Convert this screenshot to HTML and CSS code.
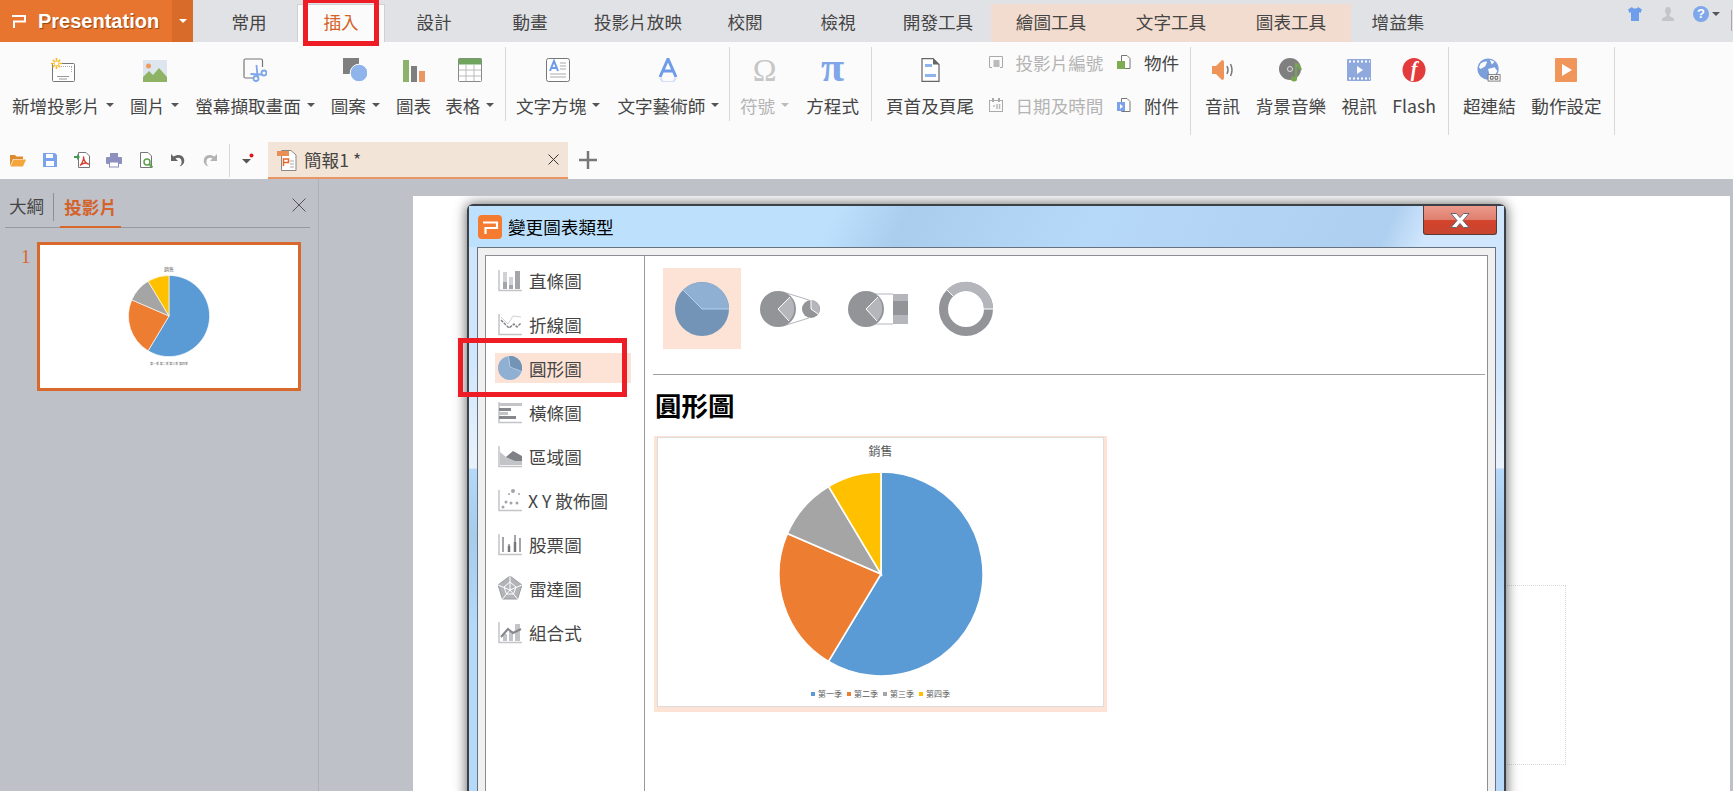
FILE: index.html
```html
<!DOCTYPE html>
<html lang="zh-Hant">
<head>
    <meta charset="UTF-8">
    <title>Presentation</title>
    <link rel="stylesheet" href="styles.css">
</head>
<body>
    <svg class="defs" width="0" height="0">
        <defs>
            <g id="pie" stroke="#fff" stroke-width="1.6">
                <path fill="#5b9bd5" d="M0 0V-102A102 102 0 1 1-52.5 87.4Z"/>
                <path fill="#ed7d31" d="M0 0L-52.5 87.4A102 102 0 0 1-93.6-40.5Z"/>
                <path fill="#a5a5a5" d="M0 0L-93.6-40.5A102 102 0 0 1-52.4-87.5Z"/>
                <path fill="#ffc000" d="M0 0L-52.4-87.5A102 102 0 0 1 0-102Z"/>
            </g>
            <path id="axis" fill="none" stroke="#c3c4c8" stroke-width="1.5" d="M1 2V22.5H24"/>
        </defs>
    </svg>

    <div class="topbar">
        <div class="logo">
            <svg class="logo-mark" width="16" height="14" viewBox="0 0 16 14"><path fill="none" stroke="#fff" stroke-width="2" d="M1 2H14V7.5H3V14"/></svg>
            <span class="logo-text">Presentation</span>
            <span class="logo-drop"><i class="caret caret-white"></i></span>
        </div>
        <div class="tabs">
            <div class="tab">常用</div>
            <div class="tab active">插入</div>
            <div class="tab">設計</div>
            <div class="tab">動畫</div>
            <div class="tab">投影片放映</div>
            <div class="tab">校閱</div>
            <div class="tab">檢視</div>
            <div class="tab">開發工具</div>
            <div class="tab tool-tab">繪圖工具</div>
            <div class="tab tool-tab">文字工具</div>
            <div class="tab tool-tab">圖表工具</div>
            <div class="tab">增益集</div>
        </div>
        <div class="top-icons">
            <svg width="16" height="16" viewBox="0 0 16 16"><path fill="#6d9deb" d="M5 1L1 3.5 2.5 7 4 6.2V15H12V6.2L13.500 7 15 3.500 11 1C10 3 6 3 5 1Z"/></svg>
            <svg width="16" height="16" viewBox="0 0 16 16"><path fill="#c3c5c9" d="M8 1C5.800 1 5 3 5 4.800 5 6.500 6 8 6.500 8.600V10L2 12.500V15H14V12.500L9.500 10V8.600C10 8 11 6.500 11 4.800 11 3 10.200 1 8 1Z"/></svg>
            <div class="help">
                <span class="help-mark">?</span>
                <i class="caret"></i>
            </div>
            <span class="top-line"></span>
        </div>
    </div>
    <div class="hilite hilite-tab"></div>

    <div class="ribbon">
        <div class="group">
            <div class="tool">
                <svg class="ico" viewBox="0 0 24 24">
                    <rect x="1.500" y="5.500" width="22" height="18" rx="1" fill="#fff" stroke="#777"/>
                    <path stroke="#aaa" stroke-dasharray="1 1" d="M10 8.500H21M20.500 9V14"/>
                    <path stroke="#999" d="M6 18.500H18M8 21H16"/>
                    <g stroke="#f9bb2b" stroke-width="1.600"><path d="M5.500 0V11M0 5.500H11M1.800 1.800L9.200 9.200M9.200 1.800L1.800 9.200"/></g>
                    <circle cx="5.500" cy="5.500" r="2" fill="#fff"/>
                </svg>
                <div class="label">新增投影片<i class="caret"></i></div>
            </div>
            <div class="tool">
                <svg class="ico" viewBox="0 0 24 24">
                    <rect y="2" width="24" height="22" fill="#dde6ef"/>
                    <circle cx="5.500" cy="8" r="2.500" fill="#ef9b5d"/>
                    <path fill="#8fb365" d="M0 24V19L6 13 10 17 16 10 24 19V24Z"/>
                </svg>
                <div class="label">圖片<i class="caret"></i></div>
            </div>
            <div class="tool">
                <svg class="ico" viewBox="0 0 24 24">
                    <path fill="none" stroke="#777" stroke-width="1.200" d="M10 20H2.500Q1 20 1 18.500V2.500Q1 1 2.500 1H18Q19.500 1 19.500 2.500V9"/>
                    <g fill="none" stroke="#7ea6e8" stroke-width="1.800">
                        <circle cx="13" cy="20.500" r="2.500"/><circle cx="21" cy="15" r="2.500"/>
                        <path d="M14.500 18.500L13.500 7M19 16.500L7.500 16"/>
                    </g>
                </svg>
                <div class="label">螢幕擷取畫面<i class="caret"></i></div>
            </div>
            <div class="tool">
                <svg class="ico" viewBox="0 0 24 24">
                    <rect width="16" height="16" fill="#7f7f7f"/>
                    <circle cx="16" cy="15" r="8.800" fill="#8fb4ec" stroke="#fff"/>
                </svg>
                <div class="label">圖案<i class="caret"></i></div>
            </div>
            <div class="tool">
                <svg class="ico" viewBox="0 0 24 24">
                    <rect x="1" y="2" width="6" height="22" fill="#8db26b"/>
                    <rect x="9" y="8" width="6" height="16" fill="#7f7f7f"/>
                    <rect x="17" y="13" width="6" height="11" fill="#eb9764"/>
                </svg>
                <div class="label">圖表</div>
            </div>
            <div class="tool tight">
                <svg class="ico" viewBox="0 0 24 24">
                    <rect x=".5" y=".5" width="23" height="23" rx="1" fill="#fff" stroke="#888"/>
                    <rect x=".5" y=".5" width="23" height="6" fill="#6fa35e"/>
                    <path stroke="#bbb" d="M8 7V23M16 7V23M1 12H23M1 18H23"/>
                </svg>
                <div class="label">表格<i class="caret"></i></div>
            </div>
        </div>
        <div class="group">
            <div class="tool">
                <svg class="ico" viewBox="0 0 24 24">
                    <rect x=".5" y=".5" width="23" height="23" rx="2" fill="#fff" stroke="#777"/>
                    <path fill="none" stroke="#6f9be8" stroke-width="2" d="M4 13L8 3 12 13M5.500 10H10.500"/>
                    <path stroke="#aaa" d="M14 5H20M14 8H20M14 11H20M4 16H20M4 19H20"/>
                </svg>
                <div class="label">文字方塊<i class="caret"></i></div>
            </div>
            <div class="tool">
                <svg class="ico" viewBox="0 0 24 24">
                    <path fill="none" stroke="#6f9be8" stroke-width="3" d="M4 19L12 1 20 19M7 13H17"/>
                    <path fill="none" stroke="#d3e0f8" stroke-width="2" d="M4 20L7 24H17L20 20"/>
                </svg>
                <div class="label">文字藝術師<i class="caret"></i></div>
            </div>
        </div>
        <div class="group">
            <div class="tool off">
                <div class="ico glyph omega">Ω</div>
                <div class="label">符號<i class="caret"></i></div>
            </div>
            <div class="tool">
                <div class="ico glyph pi">π</div>
                <div class="label">方程式</div>
            </div>
        </div>
        <div class="group tall">
            <div class="tool">
                <svg class="ico" viewBox="0 0 24 24">
                    <path fill="#fff" stroke="#666" stroke-width="1.200" d="M4 .6H15L21 6.500V23.400H4Z"/>
                    <path fill="#666" d="M15 0L21 6.500H15Z"/>
                    <rect x="7" y="6" width="7" height="3" fill="#8fb4ec"/>
                    <rect x="7" y="16" width="11" height="3" fill="#8fb4ec"/>
                </svg>
                <div class="label">頁首及頁尾</div>
            </div>
            <div class="small-col off">
                <div class="small-row">
                    <svg class="ico-s" viewBox="0 0 16 16"><path fill="none" stroke="#aaa" d="M4 13.500H1.500V2.500H14.500V13.500H12"/><rect x="5.500" y="6" width="6" height="7" fill="#bbb"/></svg>
                    <span class="small-text">投影片編號</span>
                </div>
                <div class="small-row">
                    <svg class="ico-s" viewBox="0 0 16 16"><rect x="1.500" y="3.500" width="13" height="11" fill="none" stroke="#aaa"/><path stroke="#aaa" stroke-width="2" d="M5 1V5M11 1V5"/><path stroke="#bbb" stroke-width="1.500" d="M9 7V12M11.500 7V12M5 9H7"/></svg>
                    <span class="small-text">日期及時間</span>
                </div>
            </div>
            <div class="small-col obj">
                <div class="small-row">
                    <svg class="ico-s" viewBox="0 0 16 16"><path fill="#fff" stroke="#777" d="M5.500 1.500H11L14 4.500V14.500H5.500Z"/><rect x="1" y="7" width="8" height="8" fill="#7fab53"/></svg>
                    <span class="small-text">物件</span>
                </div>
                <div class="small-row">
                    <svg class="ico-s" viewBox="0 0 16 16"><path fill="#fff" stroke="#777" d="M5.500 1.500H11L14 4.500V14.500H5.500Z"/><rect x="1" y="5" width="8" height="9" fill="#7ba3ec"/><path fill="#fff" d="M4 7L7 9.500 4 12Z"/></svg>
                    <span class="small-text">附件</span>
                </div>
            </div>
        </div>
        <div class="group tall">
            <div class="tool">
                <svg class="ico" viewBox="0 0 24 24">
                    <path fill="#ef9459" d="M1 8H5L11 2Q13 2 13 4V20Q13 22 11 22L5 16H1Z"/>
                    <path fill="none" stroke="#777" stroke-width="1.500" d="M16 8Q18 12 16 16M19.500 6Q22.500 12 19.500 18"/>
                </svg>
                <div class="label">音訊</div>
            </div>
            <div class="tool">
                <svg class="ico" viewBox="0 0 24 24">
                    <circle cx="11" cy="11" r="11" fill="#7f7f7f"/>
                    <circle cx="11" cy="11" r="2.500" fill="none" stroke="#ddd"/>
                    <path fill="none" stroke="#76a750" stroke-width="2" d="M17 21V6Q21 8 22 12"/>
                    <ellipse cx="15" cy="21" rx="3" ry="2.500" fill="#76a750"/>
                </svg>
                <div class="label">背景音樂</div>
            </div>
            <div class="tool">
                <svg class="ico" viewBox="0 0 24 24">
                    <rect y="1" width="24" height="22" rx="1" fill="#8fa9dc"/>
                    <path stroke="#fff" stroke-width="2" stroke-dasharray="2 2" d="M2 3.500H23M2 20.500H23"/>
                    <path fill="#fff" d="M10 8L16 12 10 16Z"/>
                </svg>
                <div class="label">視訊</div>
            </div>
            <div class="tool">
                <svg class="ico" viewBox="0 0 24 24">
                    <ellipse cx="12" cy="12" rx="11.500" ry="12" fill="#e33b3b"/>
                    <text class="flash-f" x="12" y="18" text-anchor="middle">f</text>
                </svg>
                <div class="label">Flash</div>
            </div>
        </div>
        <div class="group tall">
            <div class="tool">
                <svg class="ico" viewBox="0 0 26 26">
                    <circle cx="12" cy="12" r="11.500" fill="#7b9fdb"/>
                    <path fill="#fff" d="M4 6Q8 3 11 4L9 9 4 12 2 10ZM12 12L19 10 22 14 18 21 14 20ZM14 2L19 4 16 7Z"/>
                    <rect x="12" y="18" width="13" height="7" fill="#fff" stroke="#777"/>
                    <path fill="none" stroke="#555" d="M14.500 20H17.500V23H14.500ZM19.500 20H22.500V23H19.500Z"/>
                </svg>
                <div class="label">超連結</div>
            </div>
            <div class="tool">
                <svg class="ico" viewBox="0 0 24 24">
                    <rect x="1" y="0" width="22" height="24" rx="1" fill="#f0965a"/>
                    <path fill="#fff" d="M8 6L18 12 8 18Z"/>
                </svg>
                <div class="label">動作設定</div>
            </div>
        </div>
    </div>

    <div class="quickbar">
        <div class="quick">
            <svg class="q" viewBox="0 0 16 16"><path fill="#dd8a2f" d="M0 3H5L6.500 4.500H13V7H3L0 14Z"/><path fill="#f4a63c" d="M3.500 7.500H16L13 14.500H.5Z"/></svg>
            <svg class="q" viewBox="0 0 16 16"><path fill="#7ba3ec" d="M1 1H13L15 3V15H1Z"/><rect x="4" y="2" width="7" height="4" fill="#fff"/><rect x="4" y="9" width="8" height="5" fill="#fff"/></svg>
            <svg class="q" viewBox="0 0 16 16"><path fill="#fff" stroke="#777" d="M4.500 .5H12L15.500 4V15.500H4.500Z"/><path fill="none" stroke="#d8392b" stroke-width="1.300" d="M6 13.500C8 12 10 7 9.500 4.500 9.500 8 12 12 14.500 12 12 10.500 8 11 6 13.500Z"/><path fill="#3f9c55" d="M0 4H3V2L6 5 3 8V6H0Z"/></svg>
            <svg class="q" viewBox="0 0 16 16"><rect x="4" y="1" width="8" height="5" fill="#8d8fbf"/><rect y="5" width="16" height="7" rx="1" fill="#8d8fbf"/><rect x="3.500" y="10" width="9" height="5" fill="#fff" stroke="#8d8fbf"/></svg>
            <svg class="q" viewBox="0 0 16 16"><path fill="#fff" stroke="#777" d="M2.500 .5H10L13.500 4V15.500H2.500Z"/><circle cx="9" cy="10" r="3" fill="#fff" stroke="#5ea04c" stroke-width="1.500"/><path stroke="#5ea04c" stroke-width="2" d="M11 12L14.500 15.500"/></svg>
            <svg class="q" viewBox="0 0 16 16"><path fill="#666" d="M1 2V9H8L5.500 6.500C8 5 11 6 11.500 9 12 11 11 13 9.500 14.500 13 13.500 15 10.500 14 7 13 3 8 1.500 3.500 4.500Z"/></svg>
            <svg class="q" viewBox="0 0 16 16"><path fill="#b3b3b3" d="M15 2V9H8L10.500 6.500C8 5 5 6 4.500 9 4 11 5 13 6.500 14.500 3 13.500 1 10.500 2 7 3 3 8 1.500 12.500 4.500Z"/></svg>
            <span class="quick-line"></span>
            <svg class="q" viewBox="0 0 16 16"><path fill="#555" d="M2 7H11L6.500 11.500Z"/><circle cx="11.500" cy="3.500" r="2" fill="#e0141d"/></svg>
        </div>
        <div class="doc-tab">
            <svg class="doc-icon" width="20" height="22" viewBox="0 0 20 22">
                <path fill="#fff" stroke="#888" d="M4.500 1.500H14L19 6V21.500H4.500Z"/>
                <rect y="2" width="12" height="5" fill="#ea8e55"/>
                <path fill="none" stroke="#e5672a" stroke-width="1.500" d="M6.500 17V10H11.500V13.500H6.500"/>
                <path stroke="#aaa" d="M13 12H17M13 15H17M13 18H17"/>
            </svg>
            <span class="doc-name">簡報1 *</span>
            <svg class="doc-close" width="11" height="11" viewBox="0 0 11 11"><path stroke="#333" d="M.5 .5L10.500 10.500M10.500 .5L.5 10.500"/></svg>
        </div>
        <svg class="add" width="18" height="18" viewBox="0 0 18 18"><path stroke="#777" stroke-width="2.500" d="M9 0V18M0 9H18"/></svg>
    </div>

    <div class="workspace">
        <div class="side">
            <div class="side-tabs">
                <div class="side-tab">大綱</div>
                <span class="side-line"></span>
                <div class="side-tab on">投影片</div>
                <svg class="side-close" width="14" height="14" viewBox="0 0 14 14"><path stroke="#555" d="M.5 .5L13.500 13.500M13.500 .5L.5 13.500"/></svg>
            </div>
            <div class="thumb-row">
                <span class="thumb-num">1</span>
                <div class="thumb">
                    <div class="thumb-title">銷售</div>
                    <svg width="82" height="82" viewBox="-103 -103 206 206"><use href="#pie"/></svg>
                    <div class="thumb-legend">第一季 第二季 第三季 第四季</div>
                </div>
            </div>
        </div>

        <div class="main">
            <div class="slide">
                <div class="placeholder"></div>
                <div class="dialog">
                    <div class="titlebar">
                        <svg class="app-icon" width="24" height="24" viewBox="0 0 24 24">
                            <rect width="24" height="24" rx="4" fill="#f47b30"/>
                            <path fill="none" stroke="#fff" stroke-width="2.200" d="M5 7.500H19V13H7.500V19"/>
                        </svg>
                        <span class="title-text">變更圖表類型</span>
                        <div class="close-btn">
                            <svg width="20" height="15" viewBox="0 0 20 15"><path fill="#fff" stroke="#667" d="M1 .5H6.500L10 4.500 13.500 .5H19L13 7.500 19 14.500H13.500L10 10.500 6.500 14.500H1L7 7.500Z"/></svg>
                        </div>
                    </div>
                    <div class="frame">
                        <div class="panel">
                            <div class="types">
                                <div class="type">
                                    <svg class="type-ico" viewBox="0 0 24 24"><use href="#axis"/><path fill="#a3a5aa" d="M5 14H9V21H5ZM11 17H15V21H11ZM17 3H22V21H17Z"/><path fill="#d0d1d4" d="M5 4H9V14H5ZM11 9H15V17H11Z"/></svg>
                                    <span>直條圖</span>
                                </div>
                                <div class="type">
                                    <svg class="type-ico" viewBox="0 0 24 24"><use href="#axis"/><path fill="none" stroke="#d0d1d4" d="M3 5L10 12 15 4 23 5"/><path fill="none" stroke="#85878c" stroke-width="1.500" stroke-dasharray="3 1" d="M3 8L11 16 16 12 19 15 23 11"/></svg>
                                    <span>折線圖</span>
                                </div>
                                <div class="type on">
                                    <svg class="type-ico" viewBox="0 0 24 24"><circle cx="12" cy="12" r="12" fill="#8fb0d3"/><path fill="#7393b7" d="M12 12L10.500 0A12 12 0 0 1 23.500 15.500Z"/><path fill="none" stroke="#b5cde6" d="M10.500 0L12 11 23.500 15.500"/></svg>
                                    <span>圓形圖</span>
                                </div>
                                <div class="type">
                                    <svg class="type-ico" viewBox="0 0 24 24"><use href="#axis"/><path fill="#85878c" d="M1 8H13V11H1ZM1 16H18V19H1Z"/><path fill="#c3c4c8" d="M1 3H24V6H1ZM1 12H10V15H1Z"/></svg>
                                    <span>橫條圖</span>
                                </div>
                                <div class="type">
                                    <svg class="type-ico" viewBox="0 0 24 24"><use href="#axis"/><path fill="#c3c4c8" d="M2 21V8L8 13 14 9 24 13V21Z"/><path fill="#7f8186" d="M8 13L15 7 24 12V17H17Z"/></svg>
                                    <span>區域圖</span>
                                </div>
                                <div class="type xy">
                                    <svg class="type-ico" viewBox="0 0 24 24"><use href="#axis"/><g fill="#a3a5aa"><circle cx="5" cy="19" r="1.500"/><circle cx="8" cy="14" r="1.500"/><circle cx="13" cy="15" r="1.500"/><circle cx="15" cy="3" r="2"/><circle cx="19" cy="15" r="1.500"/><circle cx="21" cy="6" r="1"/><circle cx="11" cy="6" r="1"/></g></svg>
                                    <span>X Y 散佈圖</span>
                                </div>
                                <div class="type">
                                    <svg class="type-ico" viewBox="0 0 24 24"><use href="#axis"/><path stroke="#a3a5aa" stroke-width="2" d="M5 5V20M11 12V20M17 3V20M22 6V20"/><path stroke="#777" stroke-width="2.500" d="M11 14V20M17 10V20"/></svg>
                                    <span>股票圖</span>
                                </div>
                                <div class="type">
                                    <svg class="type-ico" viewBox="0 0 24 24"><path fill="#b3b4b8" stroke="#9a9ba0" d="M12 0L24 9 19.500 23H4.500L0 9Z"/><path fill="none" stroke="#fff" d="M12 0V14M0 9L12 14 24 9M4.500 23L12 14 19.500 23M12 6L18 11 15.500 18H8.500L6 11Z"/></svg>
                                    <span>雷達圖</span>
                                </div>
                                <div class="type">
                                    <svg class="type-ico" viewBox="0 0 24 24"><use href="#axis"/><path fill="#c3c4c8" d="M5 14H9V21H5ZM11 11H15V21H11ZM17 4H22V21H17Z"/><path fill="none" stroke="#85878c" stroke-width="2" d="M3 17L10 9 15 13 23 9"/></svg>
                                    <span>組合式</span>
                                </div>
                            </div>
                            <div class="detail">
                                <div class="subtypes">
                                    <div class="sub on">
                                        <svg width="56" height="56" viewBox="-28 -28 56 56"><circle r="27" fill="#7393b7"/><path fill="#8fb0d3" d="M0 0L-19-19A27 27 0 0 1 27 0Z"/><path fill="none" stroke="#b5d0ee" d="M-19-19L0 0H27"/></svg>
                                    </div>
                                    <div class="sub">
                                        <svg width="62" height="40" viewBox="0 0 62 40">
                                            <path fill="none" stroke="#b5b6bc" d="M24 3L50 11M24 37L50 29"/>
                                            <circle cx="19" cy="20" r="18" fill="#939498"/>
                                            <path fill="#b5b6bc" d="M19 20L31 8A18 18 0 0 1 30 32Z"/>
                                            <path fill="none" stroke="#fff" d="M31 8L19 20 30 32"/>
                                            <circle cx="52" cy="20" r="9" fill="#939498"/>
                                            <path fill="#b5b6bc" d="M52 20V11A9 9 0 0 1 59 25Z"/>
                                            <path fill="none" stroke="#fff" d="M52 11V20L59 25"/>
                                        </svg>
                                    </div>
                                    <div class="sub">
                                        <svg width="62" height="40" viewBox="0 0 62 40">
                                            <path fill="none" stroke="#b5b6bc" d="M24 5H46M24 35H46"/>
                                            <circle cx="19" cy="20" r="18" fill="#939498"/>
                                            <path fill="#b5b6bc" d="M19 20L31 8A18 18 0 0 1 30 32Z"/>
                                            <path fill="none" stroke="#fff" d="M31 8L19 20 30 32"/>
                                            <rect x="46" y="5" width="15" height="30" fill="#b5b6bc"/>
                                            <rect x="46" y="12" width="15" height="14" fill="#939498"/>
                                        </svg>
                                    </div>
                                    <div class="sub">
                                        <svg width="56" height="56" viewBox="-28 -28 56 56"><circle r="22.500" fill="none" stroke="#939498" stroke-width="9"/><path fill="none" stroke="#b5b6bc" stroke-width="9" d="M-16-16A22.500 22.500 0 0 1 22.500 0"/><path stroke="#fff" d="M18 0H27M-13-13L-19-19"/></svg>
                                    </div>
                                </div>
                                <div class="divider"></div>
                                <h2 class="detail-title">圓形圖</h2>
                                <div class="preview">
                                    <div class="preview-inner">
                                        <div class="chart-title">銷售</div>
                                        <svg class="chart-pie" width="206" height="206" viewBox="-103 -103 206 206"><use href="#pie"/></svg>
                                        <div class="legend">
                                            <span class="legend-item"><i class="sw sw1"></i>第一季</span>
                                            <span class="legend-item"><i class="sw sw2"></i>第二季</span>
                                            <span class="legend-item"><i class="sw sw3"></i>第三季</span>
                                            <span class="legend-item"><i class="sw sw4"></i>第四季</span>
                                        </div>
                                    </div>
                                </div>
                            </div>
                        </div>
                    </div>
                </div>
            </div>
        </div>
    </div>
    <div class="hilite hilite-type"></div>
</body>
</html>
```

FILE: styles.css
```css
* {
    box-sizing: border-box;
}
html, body {
    margin: 0;
    height: 100%;
    overflow: hidden;
}
body {
    display: flex;
    flex-direction: column;
    position: relative;
    font-family: "Noto Sans CJK TC", "Noto Sans", sans-serif;
    font-size: 17.6px;
    color: #454545;
    background: #bfc1c9;
}
.defs {
    position: absolute;
}
.caret {
    display: inline-block;
    width: 0;
    height: 0;
    margin-left: 6px;
    border-left: 4px solid transparent;
    border-right: 4px solid transparent;
    border-top: 4.5px solid #555;
}
.caret-white {
    margin: 0;
    border-top-color: #fff;
}

/* top bar */
.topbar {
    display: flex;
    flex: none;
    height: 42px;
    background: #e1e2e5;
}
.logo {
    display: flex;
    align-items: center;
    width: 193px;
    background: #e8752f;
    color: #fff;
}
.logo-mark {
    margin-left: 11px;
}
.logo-text {
    margin-left: 11px;
    font-family: "Liberation Sans", sans-serif;
    font-size: 20px;
    font-weight: bold;
    text-shadow: 1px 1px 1px rgba(90, 40, 0, 0.6);
}
.logo-drop {
    display: flex;
    align-items: center;
    justify-content: center;
    width: 21px;
    height: 100%;
    margin-left: auto;
    background: #d96b2a;
}
.tabs {
    display: grid;
    grid-template-columns: 96px 88px 98px 94px 122px 92px 94px 106px 120px 120px 120px 94px;
    margin-left: 8px;
}
.tab {
    margin-top: 4px;
    text-align: center;
    line-height: 36px;
}
.tab.active {
    background: #fbfbfb;
    border: 1px solid #d0d0d0;
    border-bottom: 0;
    color: #d5622a;
    line-height: 34px;
}
.tool-tab {
    background: #f2dccf;
}
.top-icons {
    display: flex;
    align-items: flex-start;
    flex: 1;
    justify-content: flex-end;
    gap: 17px;
    padding-top: 6px;
}
.help {
    display: flex;
    align-items: center;
}
.help-mark {
    width: 16px;
    height: 16px;
    border-radius: 50%;
    background: #7fa7ea;
    color: #fff;
    font-family: "Liberation Sans", sans-serif;
    font-size: 13px;
    font-weight: bold;
    line-height: 16px;
    text-align: center;
}
.help .caret {
    margin-left: 3px;
}
.top-line {
    width: 1px;
    height: 21px;
    margin: 4px 1px 0 -6px;
    background: #a8a8a8;
}

/* red marks over the screenshot */
.hilite {
    position: absolute;
    border: 5px solid #ee1c25;
    z-index: 5;
}
.hilite-tab {
    left: 303px;
    top: 0;
    width: 76px;
    height: 46px;
    border-top-width: 3px;
}
.hilite-type {
    left: 458px;
    top: 338px;
    width: 169px;
    height: 59px;
}

/* ribbon */
.ribbon {
    display: grid;
    flex: none;
    grid-template-columns: 506px 224px 142px 319px 258px 166px;
    align-items: start;
    height: 99px;
    padding-top: 5px;
    background: #fbfbfb;
}
.group {
    display: flex;
    gap: 17px;
    height: 74px;
    padding-left: 10px;
    border-right: 1px solid #d8d8d8;
}
.group:first-child {
    gap: 16px;
    padding-left: 12px;
}
.group.tall {
    height: 88px;
    padding-left: 14px;
    gap: 15.5px;
}
.tool {
    display: flex;
    flex-direction: column;
    align-items: center;
    padding-top: 11px;
}
.tight {
    margin-left: -2px;
}
.ico {
    width: 24px;
    height: 24px;
    flex: none;
}
.label {
    display: flex;
    align-items: center;
    height: 24px;
    margin-top: 11px;
    white-space: nowrap;
}
.off {
    color: #b4b4b4;
}
.off .caret {
    border-top-color: #bbb;
}
.glyph {
    font-family: "Liberation Serif", serif;
    font-size: 32px;
    line-height: 24px;
    text-align: center;
}
.omega {
    color: #c6c6c6;
}
.pi {
    color: #7ea6e8;
    font-size: 42px;
    font-weight: bold;
    line-height: 18px;
}
.flash-f {
    fill: #fff;
    font-family: "Liberation Serif", serif;
    font-size: 20px;
    font-style: italic;
    font-weight: bold;
}
.small-col {
    display: flex;
    flex-direction: column;
    gap: 19px;
    padding-top: 3px;
}
.small-col.obj {
    margin-left: -2.5px;
}
.small-col.off {
    margin-left: -1.500px;
}
.small-row {
    display: flex;
    align-items: center;
    gap: 11.5px;
    height: 24px;
}
.ico-s {
    width: 16px;
    height: 16px;
    flex: none;
}

/* quick access row */
.quickbar {
    display: flex;
    flex: none;
    align-items: center;
    height: 38px;
    background: #fbfbfb;
}
.quick {
    display: flex;
    flex: none;
    align-items: center;
    width: 268px;
    padding-left: 10px;
}
.q {
    width: 16px;
    height: 16px;
    margin-right: 16px;
    flex: none;
}
.q:last-child {
    margin-right: 0;
}
.quick-line {
    width: 1px;
    height: 33px;
    flex: none;
    margin: 0 10px 0 -5px;
    background: #d8d8d8;
}
.doc-tab {
    display: flex;
    align-items: center;
    align-self: flex-end;
    width: 300px;
    height: 37px;
    padding-left: 9px;
    background: #f2e4d6;
    border-bottom: 2px solid #ea9464;
}
.doc-name {
    margin-left: 7px;
}
.doc-close {
    margin-left: auto;
    margin-right: 9px;
}
.add {
    margin-left: 11px;
}

/* left panel */
.workspace {
    display: flex;
    flex: 1;
    min-height: 0;
}
.side {
    width: 319px;
    flex: none;
    border-right: 1px solid #aeb0b8;
}
.side-tabs {
    display: flex;
    align-items: flex-end;
    height: 49px;
    margin: 0 8px 0 5px;
    padding-left: 4px;
    border-bottom: 1px solid #98999f;
}
.side-tab {
    height: 35px;
    line-height: 28px;
}
.side-tab.on {
    margin-bottom: -1px;
    margin-left: 6px;
    padding: 0 4px;
    border-bottom: 2px solid #d9682d;
    color: #d5622a;
    font-weight: bold;
}
.side-line {
    width: 1px;
    height: 28px;
    margin: 0 0 6px 9px;
    background: #8d8f96;
}
.side-close {
    margin: 0 4px 15px auto;
}
.thumb-row {
    display: flex;
    padding: 14px 0 0 21px;
}
.thumb-num {
    width: 16px;
    color: #d9682d;
    font-family: "Liberation Serif", serif;
    font-size: 19px;
    line-height: 30px;
}
.thumb {
    display: flex;
    flex-direction: column;
    align-items: center;
    width: 264px;
    height: 149px;
    padding-top: 20px;
    background: #fff;
    border: 3px solid #d9682d;
    color: #666;
}
.thumb-title {
    margin-bottom: 3px;
    font-size: 5px;
    line-height: 7px;
}
.thumb-legend {
    margin-top: 5px;
    font-size: 3px;
    line-height: 4px;
}

/* slide and dialog */
.main {
    flex: 1;
    min-width: 0;
    padding: 17px 3px 0 94px;
}
.slide {
    position: relative;
    height: 100%;
    background: #fff;
    overflow: hidden;
}
.placeholder {
    position: absolute;
    top: 389px;
    right: 164px;
    width: 300px;
    height: 180px;
    border: 1px dotted #d8d8d8;
}
.dialog {
    position: absolute;
    top: 8px;
    left: 54px;
    width: 1039px;
    height: 640px;
    border: 2px solid #3c4148;
    border-radius: 6px 6px 0 0;
    background: linear-gradient(180deg, #cfe6fc 0, #cfe6fc 150px, #e9f2fb 262px, #b6d8f9 263px, #a9cbea 330px, #b6d8f9 420px);
    box-shadow: 0 0 13px rgba(0, 0, 0, 0.65);
}
.titlebar {
    display: flex;
    align-items: center;
    height: 41px;
    padding: 0 7px 0 9px;
    background: linear-gradient(115deg, #bde0fd 0, #bde0fd 35%, #aacdee 42%, #b6d8f9 60%, #aecff0 88%, #cfe6fc 92%);
}
.app-icon {
    flex: none;
}
.title-text {
    margin-left: 6px;
    color: #000;
}
.close-btn {
    display: flex;
    align-items: center;
    justify-content: center;
    align-self: flex-start;
    width: 74px;
    height: 29px;
    margin-left: auto;
    background: linear-gradient(180deg, #eb9a8c 0, #e08070 48%, #d3432c 52%, #c8452f 100%);
    border: 1px solid #5a3a38;
    border-top: 0;
    border-radius: 0 0 3px 3px;
}
.frame {
    height: 700px;
    margin: 0 8px;
    padding: 7px;
    background: #f0f0f0;
    border: 1px solid #66727f;
}
.panel {
    display: flex;
    height: 100%;
    background: #fff;
    border: 1px solid #8b8f95;
}
.types {
    display: flex;
    flex-direction: column;
    gap: 14px;
    width: 159px;
    flex: none;
    padding: 9px 0 0 9px;
    border-right: 1px solid #999;
}
.type {
    display: flex;
    align-items: center;
    gap: 7px;
    width: 136px;
    height: 30px;
    padding-left: 3px;
}
.type.on {
    background: #fde3d5;
}
.type.xy {
    gap: 6px;
}
.type-ico {
    width: 24px;
    height: 24px;
    flex: none;
}
.detail {
    flex: 1;
    min-width: 0;
    padding: 12px 2px 0 8px;
}
.subtypes {
    display: flex;
    gap: 10px;
    margin-left: 10px;
}
.sub {
    display: flex;
    align-items: center;
    justify-content: center;
    width: 78px;
    height: 81px;
}
.sub.on {
    background: #fde3d5;
}
.divider {
    height: 1px;
    margin-top: 25px;
    background: #a0a0a0;
}
.detail-title {
    margin: 12px 0 13px 2px;
    color: #000;
    font-size: 26.5px;
    font-weight: bold;
    line-height: 36px;
}
.preview {
    width: 453px;
    height: 276px;
    margin-left: 1px;
    padding: 1px 3px 5px;
    background: #fde3d5;
}
.preview-inner {
    display: flex;
    flex-direction: column;
    align-items: center;
    height: 100%;
    padding-top: 6px;
    background: #fff;
    border: 1px solid #dcdcdc;
}
.chart-title {
    color: #595959;
    font-size: 12px;
    line-height: 14px;
}
.chart-pie {
    margin-top: 13px;
}
.legend {
    display: flex;
    gap: 5px;
    margin-top: 12px;
    color: #595959;
    font-size: 8px;
    line-height: 10px;
}
.legend-item {
    display: flex;
    align-items: center;
    gap: 3px;
}
.sw {
    width: 4px;
    height: 4px;
}
.sw1 {
    background: #5b9bd5;
}
.sw2 {
    background: #ed7d31;
}
.sw3 {
    background: #a5a5a5;
}
.sw4 {
    background: #ffc000;
}
```
